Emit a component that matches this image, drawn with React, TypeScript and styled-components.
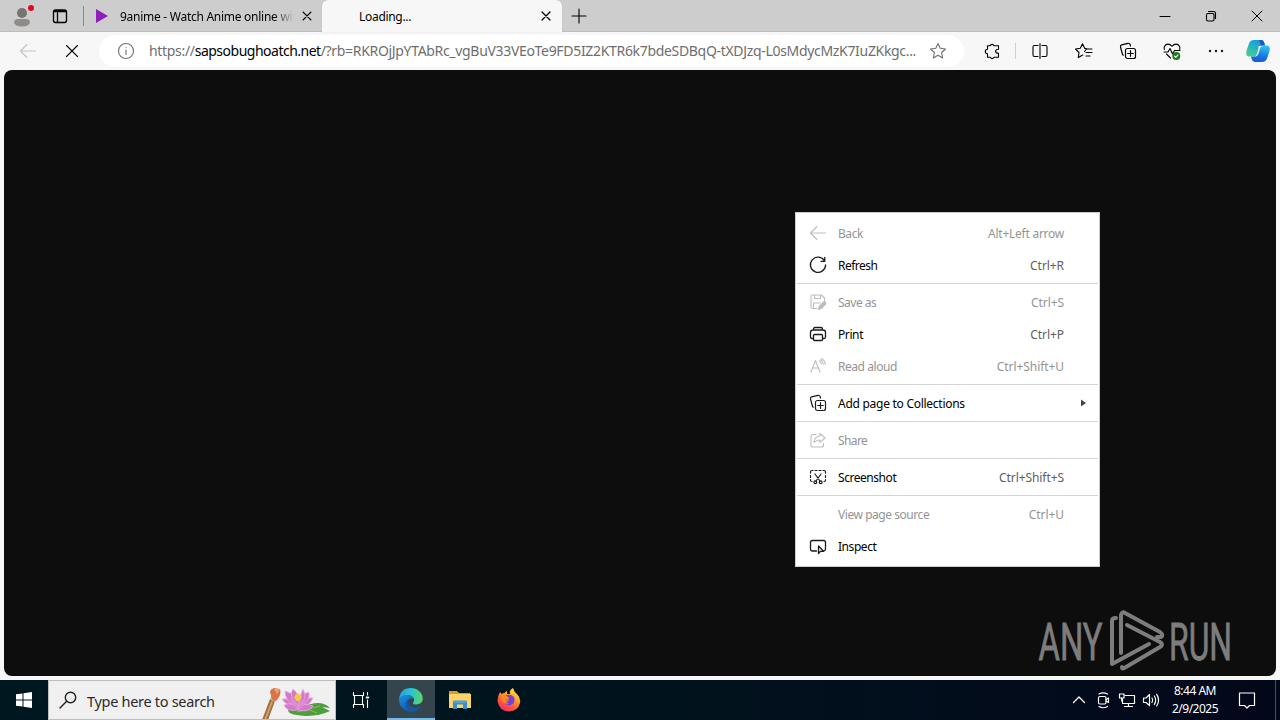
import React from "react";
import styled, { createGlobalStyle } from "styled-components";

const GlobalStyle = createGlobalStyle`
    * {
        box-sizing: border-box;
    }
    body {
        margin: 0;
        overflow: hidden;
        font-family: "Noto Sans", "Open Sans", sans-serif;
        font-size: 12px;
        color: #000000;
    }
    svg {
        display: block;
        flex: none;
        overflow: visible;
    }
`;

const Desktop = styled.div`
    display: flex;
    flex-direction: column;
    width: 1280px;
    height: 720px;
    background-color: #f7f7f7;
`;

const TabBar = styled.header`
    display: flex;
    flex: 0 0 32px;
    background-color: #cdcdcd;
    box-shadow: inset 0 -1px 0 #bdbdbd;
`;

const Slot = styled.div<{ $w: number }>`
    display: flex;
    flex: 0 0 ${props => props.$w}px;
    align-items: center;
    justify-content: center;
`;

const Divider = styled.i<{ $h: number; $color: string; $shift: number }>`
    width: 1px;
    height: ${props => props.$h}px;
    margin-left: ${props => props.$shift}px;
    background-color: ${props => props.$color};
`;

const Tab = styled.div<{ $active?: boolean }>`
    display: flex;
    align-items: center;
    width: ${props => (props.$active ? 240 : 238)}px;
    height: 32px;
    padding-left: ${props => (props.$active ? 37 : 12)}px;
    padding-right: 8px;
    background-color: ${props => (props.$active ? "#f7f7f7" : "transparent")};
    border-radius: ${props => (props.$active ? "6px 6px 0 0" : "0 0 6px 0")};
    box-shadow: ${props => (props.$active ? "0 0 1px #aaaaaa" : "none")};
`;

const TabTitle = styled.span<{ $fade?: boolean; $spacing: number }>`
    flex: 1;
    padding-top: 1px;
    margin-left: ${props => (props.$fade ? 12 : 0)}px;
    margin-right: ${props => (props.$fade ? 6 : 0)}px;
    overflow: hidden;
    white-space: nowrap;
    line-height: 18px;
    letter-spacing: ${props => props.$spacing}px;
    mask-image: ${props => (props.$fade ? "linear-gradient(90deg, #000 88%, transparent)" : "none")};
`;

const Spacer = styled.div`
    flex: 1;
`;

const Toolbar = styled.nav`
    display: flex;
    flex: 0 0 38px;
    align-items: center;
    padding-left: 6px;
`;

const BackSlot = styled(Slot)`
    color: #c4c4c4;
`;

const AddressBar = styled.div`
    display: flex;
    align-items: center;
    width: 865px;
    height: 32px;
    margin-left: 5px;
    padding: 0 16px 0 17px;
    background-color: #ffffff;
    border-radius: 16px;
`;

const Url = styled.span`
    flex: 1;
    margin-left: 13px;
    white-space: nowrap;
    font-size: 14px;
    line-height: 20px;
    color: #6e6e6e;
    letter-spacing: -0.32px;

    b {
        font-weight: 400;
        color: #000000;
        letter-spacing: -0.5px;
    }
`;

const Page = styled.main`
    flex: 0 0 606px;
    margin: 0 4px 4px;
    background-color: #0d0d0d;
    border-radius: 8px;
`;

const Menu = styled.ul`
    position: absolute;
    top: 212px;
    left: 795px;
    width: 305px;
    margin: 0;
    padding: 4px 1px;
    list-style: none;
    background-color: #ffffff;
    border: 1px solid #cccccc;
`;

const MenuItem = styled.li<{ $disabled?: boolean }>`
    display: flex;
    align-items: center;
    height: 32px;
    padding: 0 12px 0 11px;
    color: ${props => (props.$disabled ? "#949494" : "#000000")};

    svg {
        color: ${props => (props.$disabled ? "#bdbdbd" : "#1b1b1b")};
    }
`;

const MenuLabel = styled.span<{ $spacing?: number }>`
    flex: 1;
    margin-left: 10px;
    padding-top: 1px;
    line-height: 18px;
    letter-spacing: ${props => props.$spacing ?? -0.45}px;
`;

const Shortcut = styled.span<{ $disabled?: boolean; $spacing?: number }>`
    margin-right: 22px;
    padding-top: 1px;
    line-height: 18px;
    letter-spacing: ${props => props.$spacing ?? -0.07}px;
    color: ${props => (props.$disabled ? "#949494" : "#5e5e5e")};
`;

const Separator = styled.li`
    height: 5px;
    padding: 2px 0;
    background-clip: content-box;
    background-color: #d4d4d4;
`;

const Watermark = styled.div`
    position: absolute;
    top: 606px;
    left: 1036px;
`;

const Taskbar = styled.footer`
    display: flex;
    flex: 0 0 40px;
    background: linear-gradient(90deg, #00171f 0, #00141d 45%, #020d1c 75%, #02081a 100%);
`;

const SearchBox = styled.div`
    display: flex;
    align-items: center;
    width: 288px;
    height: 40px;
    padding-left: 9px;
    padding-right: 3px;
    background-color: #f0f0f0;
    border: 1px solid #bebebe;
    overflow: hidden;
`;

const SearchText = styled.span`
    flex: 1;
    margin-left: 9px;
    padding-top: 1px;
    font-size: 14.5px;
    line-height: 20px;
    letter-spacing: -0.3px;
    color: #2b2b2b;
`;

const TaskButton = styled.div<{ $active?: boolean }>`
    display: flex;
    align-items: center;
    justify-content: center;
    width: 48px;
    height: 40px;
    margin-right: 1px;
    background-color: ${props => (props.$active ? "#34454d" : "transparent")};
    box-shadow: ${props => (props.$active ? "inset 0 -2px 0 #76b9ed" : "none")};
`;

const Clock = styled.div`
    width: 64px;
    padding-top: 2px;
    font-size: 12px;
    line-height: 18px;
    letter-spacing: -0.5px;
    text-align: center;
    color: #ffffff;
`;

const Peek = styled.div`
    width: 5px;
    border-left: 1px solid #4a515e;
`;

interface IIcon {
    size?: number;
    width?: number;
    color?: string;
    children?: React.ReactNode;
}

// every line icon is drawn on a 20 unit grid
function Icon({ size = 20, width = 1.1, color = "currentColor", children }: IIcon) {
    return (
        <svg width={size} height={size} viewBox="0 0 20 20" fill="none" stroke={color} strokeWidth={width} strokeLinecap="round" strokeLinejoin="round">
            {children}
        </svg>
    );
}

const CloseIcon = ({ size = 20, r = 4, width = 1.2 }: { size?: number; r?: number; width?: number }) => (
    <Icon size={size} width={width}><path d={`M${10 - r} ${10 - r}L${10 + r} ${10 + r}M${10 + r} ${10 - r}L${10 - r} ${10 + r}`} /></Icon>
);

const BackIcon = () => (
    <Icon><path d="M17.5 10H2.8M9 3.5L2.5 10L9 16.5" /></Icon>
);

const CollectionsIcon = () => (
    <Icon width={1.2}>
        <rect x="7.5" y="7.5" width="10" height="10" rx="2" />
        <path d="M12.5 9.7v5.6M9.7 12.5h5.6M5.3 14.2L4.5 13.5L2.5 6Q2.1 4.3 3.7 3.9L10 2.3Q11.6 2 12.1 3.5L12.5 5" />
    </Icon>
);

interface IMenuEntry {
    label: string;
    shortcut?: string;
    disabled?: boolean;
    submenu?: boolean;
    spacing?: number;
    keySpacing?: number;
    icon: React.ReactNode;
}

const menuGroups: IMenuEntry[][] = [
    [
        { label: "Back", shortcut: "Alt+Left arrow", disabled: true, keySpacing: -0.25, icon: <BackIcon /> },
        {
            label: "Refresh",
            shortcut: "Ctrl+R",
            spacing: -0.5,
            icon: <Icon width={1.3}><path d="M16.6 6A7.6 7.6 0 1 0 17.6 10M16.8 2.5V6.3H13" /></Icon>
        }
    ],
    [
        {
            label: "Save as",
            shortcut: "Ctrl+S",
            disabled: true,
            spacing: -0.5,
            icon: (
                <Icon>
                    <path d="M9 16.5H4.5Q3 16.5 3 15V4.5Q3 3 4.5 3H13.5L16.5 6V8.5M6.5 3V6.5H12.5V3M5.5 16.5V11H12" />
                    <path d="M10.5 17.5L11.2 14.5L15.7 10Q16.6 9.3 17.5 10.2Q18.3 11 17.6 12L13.3 16.5Z" fill="currentColor" />
                </Icon>
            )
        },
        {
            label: "Print",
            shortcut: "Ctrl+P",
            spacing: -0.4,
            icon: (
                <Icon width={1.3}>
                    <path d="M5.5 14.5H4Q2.5 14.5 2.5 13V8.5Q2.5 6 5 6H15Q17.5 6 17.5 8.5V13Q17.5 14.5 16 14.5H14.5M5.5 6V5Q5.5 3.5 7 3.5H13Q14.5 3.5 14.5 5V6" />
                    <rect x="5.5" y="10.5" width="9" height="6" rx="1" />
                </Icon>
            )
        },
        {
            label: "Read aloud",
            shortcut: "Ctrl+Shift+U",
            disabled: true,
            icon: <Icon><path d="M3 16L7.5 4.5L12 16M4.7 12H10.3M11.5 5Q13 6 13.2 8M13.5 2.5Q17 4.5 17.3 8.5M12.5 3.8Q15 5.3 15.3 8.2" /></Icon>
        }
    ],
    [{ label: "Add page to Collections", submenu: true, spacing: -0.27, icon: <CollectionsIcon /> }],
    [
        {
            label: "Share",
            disabled: true,
            spacing: -0.6,
            icon: <Icon><path d="M8 4.5H5Q3 4.5 3 6.5V15Q3 17 5 17H13.5Q15.5 17 15.5 15V13.5M12 3.5L17 8L12 12.3V10Q8.5 9.8 6 12.5Q6.5 6.5 12 6Z" /></Icon>
        }
    ],
    [
        {
            label: "Screenshot",
            shortcut: "Ctrl+Shift+S",
            icon: (
                <Icon width={1.2}>
                    <path d="M2.5 6V5Q2.5 3.5 4 3.5H5M7 3.5H9M11 3.5H13M15 3.5H16Q17.5 3.5 17.5 5V6M2.5 8.5V10.5M17.5 8.5V10.5M2.5 12.5V13Q2.5 14.5 4 14.5M17.5 12.5V13Q17.5 14.5 16 14.5M7 7L12 14M13 7L8 14" />
                    <circle cx="7.3" cy="15.3" r="1.4" />
                    <circle cx="12.7" cy="15.3" r="1.4" />
                </Icon>
            )
        }
    ],
    [
        { label: "View page source", shortcut: "Ctrl+U", disabled: true, icon: <Icon /> },
        {
            label: "Inspect",
            icon: (
                <Icon width={1.3}>
                    <path d="M8.5 15H4.5Q2.5 15 2.5 13V6.5Q2.5 4.5 4.5 4.5H15.5Q17.5 4.5 17.5 6.5V13Q17.5 14.5 16 14.8" />
                    <path d="M10.5 10V17.5L12.5 15.3H15.5Z" />
                </Icon>
            )
        }
    ]
];

function ContextMenu() {
    return (
        <Menu>
            {menuGroups.map((group, index) => (
                <React.Fragment key={index}>
                    {index > 0 && <Separator />}
                    {group.map(item => (
                        <MenuItem key={item.label} $disabled={item.disabled}>
                            {item.icon}
                            <MenuLabel $spacing={item.spacing}>{item.label}</MenuLabel>
                            {item.shortcut && <Shortcut $disabled={item.disabled} $spacing={item.keySpacing}>{item.shortcut}</Shortcut>}
                            {item.submenu && <svg width="5" height="8"><path d="M0 0.500L5 4L0 7.500Z" fill="#444444" /></svg>}
                        </MenuItem>
                    ))}
                </React.Fragment>
            ))}
        </Menu>
    );
}

function Tabs() {
    return (
        <TabBar>
            <Slot $w={44}>
                <svg width="22" height="24" viewBox="0 0 22 24">
                    <circle cx="11" cy="9" r="5" fill="#777371" />
                    <path d="M3 19Q3 15 7 15H15Q19 15 19 19Q17 22.5 11 22.5Q5 22.5 3 19Z" fill="#8f8b89" />
                    <circle cx="20" cy="4" r="3" fill="#e00b1c" />
                </svg>
            </Slot>
            <Slot $w={32}>
                <Icon width={1.3}>
                    <rect x="3.5" y="4" width="13" height="12.5" rx="2" />
                    <path d="M3.5 5.5H16.5M4.5 4.8H15.5M7.5 7V16.5" />
                </Icon>
            </Slot>
            <Slot $w={8}><Divider $h={20} $color="#8a8a8a" $shift={7} /></Slot>
            <Tab>
                <svg width="12" height="14"><path d="M0 0L12 7L0 14Z" fill="#8d20b8" /></svg>
                <TabTitle $fade $spacing={-0.27}>9anime - Watch Anime online with</TabTitle>
                <CloseIcon size={14} r={5.5} width={1.9} />
            </Tab>
            <Tab $active>
                <TabTitle $spacing={-0.3}>Loading...</TabTitle>
                <CloseIcon size={16} r={5} width={1.6} />
            </Tab>
            <Slot $w={34}><Icon><path d="M10 3V17M3 10H17" /></Icon></Slot>
            <Spacer />
            <Slot $w={46}><Icon width={1}><path d="M5 10.5H15" /></Icon></Slot>
            <Slot $w={46}><Icon><path d="M7.5 5.5H12.5Q14.5 5.5 14.5 7.5V12.5" /><rect x="5.5" y="7.5" width="7.5" height="7.5" rx="1.5" /></Icon></Slot>
            <Slot $w={46}><CloseIcon r={5} width={1} /></Slot>
        </TabBar>
    );
}

function BrowserToolbar() {
    return (
        <Toolbar>
            <BackSlot $w={44}><BackIcon /></BackSlot>
            <Slot $w={44}><CloseIcon r={5.5} width={1.1} /></Slot>
            <AddressBar>
                <Icon color="#6e6e6e"><circle cx="10" cy="10" r="7.5" /><path d="M10 9V13.5M10 6.5V6.6" /></Icon>
                <Url>https://<b>sapsobughoatch.net</b>/?rb=RKROjJpYTAbRc_vgBuV33VEoTe9FD5IZ2KTR6k7bdeSDBqQ-tXDJzq-L0sMdycMzK7IuZKkgc...</Url>
                <Icon color="#6e6e6e"><path d="M10 2.5L12.2 7.3L17.5 8L13.6 11.5L14.6 17L10 14.3L5.4 17L6.4 11.5L2.5 8L7.8 7.3Z" /></Icon>
            </AddressBar>
            <Slot $w={56}>
                <Icon><path d="M5.5 4.8H8.2A2 2 0 0 1 12 4.8H16.5V8.3Q13.6 8.300 13.6 10.3Q13.6 12.3 16.5 12.3V16.2H12A2 2 0 0 1 8.2 16.2H5.5V12.700A2.200 2.200 0 0 1 5.5 8.300Z" /></Icon>
            </Slot>
            <Slot $w={0}><Divider $h={16} $color="#cfcfcf" $shift={-10} /></Slot>
            <Slot $w={40}>
                <Icon><path d="M8 4.5H4.5Q3 4.5 3 6V14Q3 15.5 4.5 15.5H8M12 4.5H15.5Q17 4.5 17 6V14Q17 15.5 15.5 15.5H12M10 2.5V17.5" /></Icon>
            </Slot>
            <Slot $w={48}>
                <Icon><path d="M12.5 7.5H10.8L8.5 2.8L6.3 7.3L1.5 8L5 11.5L4.3 16.5L8.7 14M10.5 10.5L12.5 8H18M12 11.5H18M12 15H16" /></Icon>
            </Slot>
            <Slot $w={40}><CollectionsIcon /></Slot>
            <Slot $w={48}>
                <Icon>
                    <path d="M2.3 8.5Q1.500 6 3.5 4Q6.5 1.7 10 5.2Q13.5 1.7 16.5 4Q18.5 6 17.7 8.5M2 11H6L8 7.5L10.5 13L12.5 9.5H18M4.5 13L8.5 17" />
                    <circle cx="14.3" cy="15" r="4" fill="#1a7a1a" stroke="none" />
                    <path d="M12.6 15.2L13.8 16.3L16 13.8" stroke="#ffffff" />
                </Icon>
            </Slot>
            <Slot $w={40}>
                <Icon color="none"><g fill="#1b1b1b"><circle cx="4" cy="10" r="1.2" /><circle cx="10" cy="10" r="1.2" /><circle cx="16" cy="10" r="1.2" /></g></Icon>
            </Slot>
            <Slot $w={44}>
                <svg width="24" height="24" viewBox="0 0 24 24">
                    <defs>
                        <linearGradient id="cpA" x1="0.7" y1="0" x2="0.3" y2="1"><stop offset="0" stopColor="#1598ea" /><stop offset="0.5" stopColor="#25b5bd" /><stop offset="1" stopColor="#48ce88" /></linearGradient>
                        <linearGradient id="cpB" x1="0.6" y1="0" x2="0.4" y2="1"><stop offset="0" stopColor="#35c2ee" /><stop offset="0.6" stopColor="#187be0" /><stop offset="1" stopColor="#1b58d9" /></linearGradient>
                    </defs>
                    <path d="M8 1H15.5Q17.5 1 18.3 4L19 6.5H16Q14 6.5 13.2 9L11.4 15Q10.6 17.5 8 17.5H3.5Q-1 17.5 0.5 12L2.8 5Q4 1 8 1Z" fill="url(#cpA)" />
                    <path d="M13 1H15.5Q17.5 1 18.3 4L19 6.5H14.5Q14.5 3 13 1Z" fill="#1a59bd" />
                    <path d="M16 23H8.5Q6.5 23 5.7 20L5 17.5H8Q10 17.5 10.8 15L12.6 9Q13.4 6.5 16 6.5H20.5Q25 6.5 23.5 12L21.2 19Q20 23 16 23Z" fill="url(#cpB)" />
                    <path d="M12.5 7H16Q14.5 7.5 14 9.5L12 15.500Q11.300 17.5 9 17.5H8Q10.2 17 10.8 15L12.6 9Z" fill="#f7f7f7" />
                </svg>
            </Slot>
        </Toolbar>
    );
}

const Logo = () => (
    <svg width="200" height="70" viewBox="0 0 200 70">
        <g fill="#7d7d7d" stroke="#7d7d7d" strokeWidth="0.8" fontFamily="Roboto, sans-serif" fontSize="52">
            <text x="2.5" y="53.5" textLength="64" lengthAdjust="spacingAndGlyphs">ANY</text>
            <text x="133" y="53.5" textLength="63" lengthAdjust="spacingAndGlyphs">RUN</text>
        </g>
        <g fill="none" stroke="#7d7d7d" strokeWidth="4" strokeLinejoin="round" strokeLinecap="round">
            <path d="M80 12Q76 12 76 15V58L113 38" />
            <path d="M85 47V9Q86 5 89 7L124 26Q128 29 125 31H121" />
            <path d="M91 19L124 36Q128 38.5 124 41L90 61Q86 64 86 61" />
        </g>
    </svg>
);

const SearchArt = () => (
    <svg width="75" height="38" viewBox="0 0 75 38">
        <path d="M5 39L13 18L18 20L11 39Z" fill="#a46e3c" />
        <path d="M7 39L14.5 20L16 20.5L9 39Z" fill="#d0a478" />
        <path d="M13 18L15 12L20 14L18 21Z" fill="#c8c4bd" />
        <path d="M14 14Q11 9 17 7L23 8Q25 14 19 20Q14 20 14 14Z" fill="#d87545" />
        <path d="M17 8L23 8L20 13Z" fill="#f0a272" />
        <path d="M31 28Q41 22 54 23Q66 20 73 27L65 26L73 30Q58 37 40 34Q30 33 31 28Z" fill="#4e9d3e" />
        <path d="M40 31L63 25M50 28L60 32" stroke="#89bd55" />
        <g fill="#d678ca" stroke="#efb5e6" strokeWidth="0.7">
            <path d="M41 28Q28 24 25 18Q36 16 41 28Z" />
            <path d="M41 28Q53 25 56 17Q45 15 41 28Z" />
            <path d="M41 28Q27 19 28 10Q41 13 41 28Z" />
            <path d="M41 28Q54 20 52 11Q41 13 41 28Z" />
            <path d="M41 28Q31 14 36 8Q45 15 41 28Z" />
            <path d="M41 28Q43 13 46 8Q52 18 41 28Z" />
            <path d="M41 29Q29 31 27 24Q37 20 41 29Z" />
            <path d="M41 29Q52 32 56 25Q45 20 41 29Z" />
        </g>
        <path d="M37 16L40 12L45 15L43 20H39Z" fill="#f3c84b" />
        <path d="M41 29Q32 21 34 17Q41 19 41 29Q42 19 48 17Q50 24 41 29Z" fill="#df8bd5" />
    </svg>
);

const EdgeIcon = () => (
    <svg width="24" height="24" viewBox="0 0 24 24">
        <defs>
            <linearGradient id="edgeTop"><stop offset="0" stopColor="#259ddf" /><stop offset="0.5" stopColor="#2bc3d2" /><stop offset="1" stopColor="#60d660" /></linearGradient>
            <linearGradient id="edgeLow" x1="0" y1="0" x2="0.5" y2="1"><stop offset="0" stopColor="#1b93df" /><stop offset="1" stopColor="#0b57ad" /></linearGradient>
        </defs>
        <path d="M0 11.5Q1 0 12 0Q20 0 23.5 8Q25 16 17.5 16.5Q13.5 16.5 14 14.5Q15.5 13 15 11Q13.5 7 8 7Q3 7 0 11.5Z" fill="url(#edgeTop)" />
        <path d="M0 12Q2 7 7.5 7Q13 7 14.8 10.5Q10 9 8.8 13.5Q8.5 21 17 24Q11 25 6 22Q0 18 0 12Z" fill="url(#edgeLow)" />
        <path d="M10 10.5Q7.5 17 12.5 19Q18 21 22 17.5Q19 24 14 24Q7 23 6.5 16Q7 12 10 10.5Z" fill="#1458a0" />
    </svg>
);

const FolderIcon = () => (
    <svg width="22" height="20" viewBox="0 0 22 20">
        <path d="M0 1H8L10 3H21V6H0Z" fill="#dc9a25" />
        <path d="M0 4H22V18H0Z" fill="#fbd469" />
        <path d="M4 19V12Q4 10.5 5.5 10.5H16.5Q18 10.5 18 12V19H14V14.5H8V19Z" fill="#398ec8" />
        <path d="M5 12H17" stroke="#65b8e8" />
    </svg>
);

const FirefoxIcon = () => (
    <svg width="24" height="24" viewBox="0 0 24 24">
        <defs>
            <linearGradient id="fox" x1="0.8" y1="0" x2="0.2" y2="1"><stop offset="0" stopColor="#fff04a" /><stop offset="0.35" stopColor="#ffa32b" /><stop offset="0.65" stopColor="#ff5a36" /><stop offset="1" stopColor="#ec2878" /></linearGradient>
        </defs>
        <path d="M3 4Q4 5 4.5 6Q6 5 7.5 5Q9 3 10 3V6H13Q12 2 16 0Q17 4 20 6Q24 10 23 15Q21 23 12 23.5Q2 23 0.5 13Q0.5 8 3 4Z" fill="url(#fox)" />
        <path d="M7 8Q13 5 17 9Q19 15 14 17Q9 18 7 14Q10 15 12 12H8Z" fill="#7542d5" />
        <path d="M4.5 7Q8 6 11 9Q13 10 11 11.5L8 12Q8 15 12 15Q9 17 6 14Q4 11 4.5 7Z" fill="#ff8b20" />
    </svg>
);

function WindowsTaskbar() {
    return (
        <Taskbar>
            <Slot $w={48}>
                <svg width="16" height="16" viewBox="0 0 16 16"><path d="M0 2.3L6.5 1.4V7.5H0ZM7.5 1.2L16 0V7.5H7.5ZM0 8.5H6.5V14.6L0 13.7ZM7.5 8.5H16V16L7.5 14.8Z" fill="#ffffff" /></svg>
            </Slot>
            <SearchBox>
                <Icon color="#202020" width={1.4}><circle cx="12.5" cy="7.5" r="5.2" /><path d="M8.7 11.3L2 18" /></Icon>
                <SearchText>Type here to search</SearchText>
                <SearchArt />
            </SearchBox>
            <Slot $w={51}>
                <Icon color="#ffffff" width={1.1}>
                    <path d="M1.5 2.5V5.500H11.500V2.500M1.500 17.5V14.5H11.5V17.5M2.5 5.5V14.5M10.5 5.5V14.5M15.5 2.5V5M15.500 10V17.5" />
                    <path d="M14.8 7.5H16.2" strokeWidth="2.2" />
                </Icon>
            </Slot>
            <TaskButton $active><EdgeIcon /></TaskButton>
            <TaskButton><FolderIcon /></TaskButton>
            <TaskButton><FirefoxIcon /></TaskButton>
            <Spacer />
            <Slot $w={24}><Icon color="#ffffff" width={1.3}><path d="M4.5 12.5L10 7L15.5 12.5" /></Icon></Slot>
            <Slot $w={24}><Icon color="#ffffff" width={1.2}><rect x="5.5" y="6.5" width="7.5" height="7.5" rx="1.5" /><path d="M13 9.5L15.5 8V12.5L13 11M6 4Q10 1.600 14.5 4M6 16.500Q10 19 14.5 16.500" /></Icon></Slot>
            <Slot $w={24}><Icon color="#ffffff" width={1.2}><path d="M8 5.5H17.5V13.5H5.5V9M11.5 13.5V16.5M7.5 16.5H15.5" /><rect x="2.5" y="4" width="4.5" height="4" /><path d="M4.7 8V11" /></Icon></Slot>
            <Slot $w={24}><Icon color="#ffffff" width={1.2}><path d="M2.5 8V12.5H5L8.5 15.5V4.5L5 8ZM11 8Q12.5 10 11 12.5M13.3 6Q16 10 13.3 14.5M15.7 4.3Q19.5 10 15.7 16" /></Icon></Slot>
            <Clock>8:44 AM<br />2/9/2025</Clock>
            <Slot $w={40}><Icon color="#ffffff" width={1.2}><path d="M2.5 3H17.5V15.5H12.5L10 18L7.5 15.5H2.5Z" /></Icon></Slot>
            <Slot $w={8} />
            <Peek />
        </Taskbar>
    );
}

function App() {
    return (
        <Desktop>
            <GlobalStyle />
            <Tabs />
            <BrowserToolbar />
            <Page />
            <WindowsTaskbar />
            <Watermark><Logo /></Watermark>
            <ContextMenu />
        </Desktop>
    );
}

export default App;
